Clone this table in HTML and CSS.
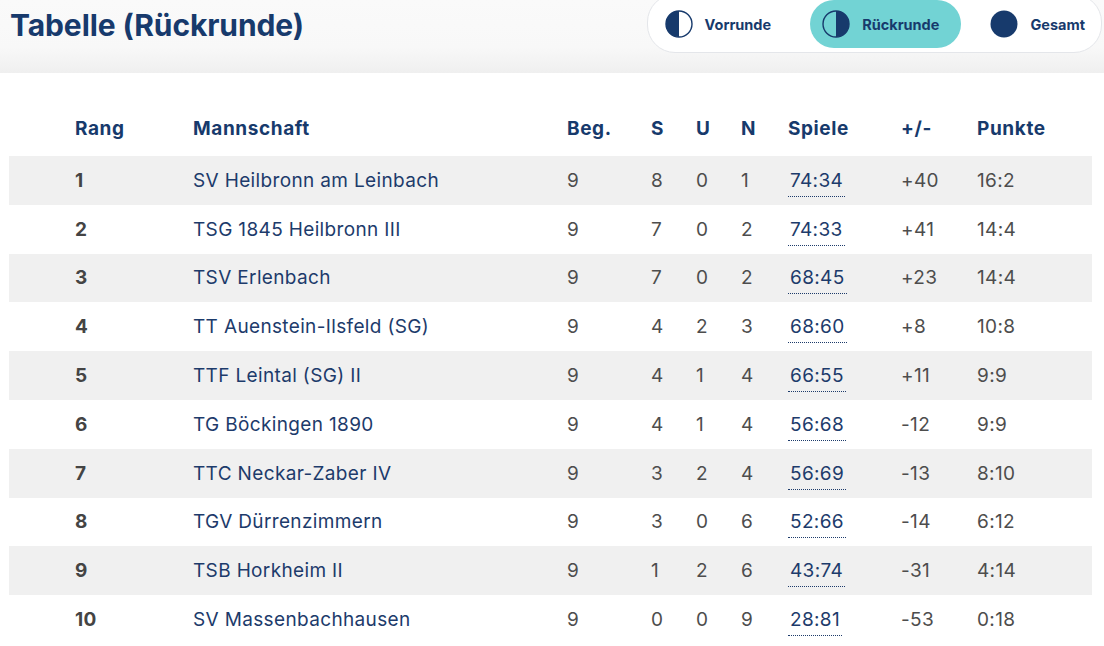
FILE: index.html
```html
<!DOCTYPE html>
<html lang="de">
<head>
<meta charset="utf-8">
<title>Tabelle (Rückrunde)</title>
<link rel="stylesheet" href="styles.css">
</head>
<body>
<header class="topbar">
  <h1 class="title">Tabelle (Rückrunde)</h1>
  <nav class="toggle">
    <a class="tbtn" href="#">
      <svg class="ico" viewBox="0 0 28 28"><circle cx="14" cy="14" r="13" fill="none" stroke="#173a6c" stroke-width="1.4"/><path d="M14 1 A13 13 0 0 0 14 27 Z" fill="#173a6c"/></svg>
      <span>Vorrunde</span>
    </a>
    <a class="tbtn active" href="#">
      <svg class="ico" viewBox="0 0 28 28"><circle cx="14" cy="14" r="13" fill="none" stroke="#173a6c" stroke-width="1.4"/><path d="M14 1 A13 13 0 0 1 14 27 Z" fill="#173a6c"/></svg>
      <span>Rückrunde</span>
    </a>
    <a class="tbtn last" href="#">
      <svg class="ico" viewBox="0 0 28 28"><circle cx="14" cy="14" r="13.5" fill="#173a6c"/></svg>
      <span>Gesamt</span>
    </a>
  </nav>
</header>
<main>
<table class="standings">
  <colgroup>
    <col class="c-rang"><col class="c-team"><col class="c-beg"><col class="c-s"><col class="c-u"><col class="c-n"><col class="c-spiele"><col class="c-diff"><col class="c-pkt">
  </colgroup>
  <thead>
    <tr><th class="rang">Rang</th><th>Mannschaft</th><th>Beg.</th><th>S</th><th>U</th><th>N</th><th>Spiele</th><th>+/-</th><th>Punkte</th></tr>
  </thead>
  <tbody>
    <tr><td class="rang">1</td><td class="team">SV Heilbronn am Leinbach</td><td>9</td><td>8</td><td>0</td><td>1</td><td><span class="games">74:34</span></td><td>+40</td><td>16:2</td></tr>
    <tr><td class="rang">2</td><td class="team">TSG 1845 Heilbronn III</td><td>9</td><td>7</td><td>0</td><td>2</td><td><span class="games">74:33</span></td><td>+41</td><td>14:4</td></tr>
    <tr><td class="rang">3</td><td class="team">TSV Erlenbach</td><td>9</td><td>7</td><td>0</td><td>2</td><td><span class="games">68:45</span></td><td>+23</td><td>14:4</td></tr>
    <tr><td class="rang">4</td><td class="team">TT Auenstein-Ilsfeld (SG)</td><td>9</td><td>4</td><td>2</td><td>3</td><td><span class="games">68:60</span></td><td>+8</td><td>10:8</td></tr>
    <tr><td class="rang">5</td><td class="team">TTF Leintal (SG) II</td><td>9</td><td>4</td><td>1</td><td>4</td><td><span class="games">66:55</span></td><td>+11</td><td>9:9</td></tr>
    <tr><td class="rang">6</td><td class="team">TG Böckingen 1890</td><td>9</td><td>4</td><td>1</td><td>4</td><td><span class="games">56:68</span></td><td>-12</td><td>9:9</td></tr>
    <tr><td class="rang">7</td><td class="team">TTC Neckar-Zaber IV</td><td>9</td><td>3</td><td>2</td><td>4</td><td><span class="games">56:69</span></td><td>-13</td><td>8:10</td></tr>
    <tr><td class="rang">8</td><td class="team">TGV Dürrenzimmern</td><td>9</td><td>3</td><td>0</td><td>6</td><td><span class="games">52:66</span></td><td>-14</td><td>6:12</td></tr>
    <tr><td class="rang">9</td><td class="team">TSB Horkheim II</td><td>9</td><td>1</td><td>2</td><td>6</td><td><span class="games">43:74</span></td><td>-31</td><td>4:14</td></tr>
    <tr><td class="rang">10</td><td class="team">SV Massenbachhausen</td><td>9</td><td>0</td><td>0</td><td>9</td><td><span class="games">28:81</span></td><td>-53</td><td>0:18</td></tr>
  </tbody>
</table>
</main>
</body>
</html>
```

FILE: styles.css
```css
* { box-sizing: border-box; }
html, body { margin: 0; padding: 0; overflow: hidden; }
body {
  font-family: Inter, "Noto Sans", "Liberation Sans", sans-serif;
  background: #ffffff;
  color: #173a6c;
  width: 1104px;
  height: 646px;
}
.topbar {
  height: 73px;
  display: flex;
  justify-content: space-between;
  align-items: flex-start;
  background: linear-gradient(to bottom, #fafafa 0%, #f8f8f8 65%, #efefef 100%);
}
.title {
  margin: 0;
  padding: 7px 0 0 10px;
  font-size: 30px;
  line-height: 36px;
  font-weight: 700;
  color: #173a6c;
  letter-spacing: -0.1px;
}
.toggle {
  margin-top: -6px;
  margin-right: 2px;
  height: 59px;
  padding: 5px 0 5px 5px;
  display: flex;
  gap: 17px;
  background: #ffffff;
  border: 1px solid #e4e6ea;
  border-radius: 28px;
}
.tbtn {
  display: flex;
  align-items: center;
  gap: 12px;
  height: 48px;
  padding: 0 22px 0 12px;
  border-radius: 24px;
  color: #173a6c;
  text-decoration: none;
  font-size: 14.5px;
  font-weight: 700;
}
.tbtn.active { background: #72d3d4; }
.tbtn.last { padding-right: 16px; }
.ico { width: 28px; height: 28px; display: block; flex: none; }

.standings {
  margin: 31px 0 0 9px;
  width: 1083px;
  border-collapse: collapse;
  table-layout: fixed;
  font-size: 19px;
  letter-spacing: 0.35px;
}
.c-rang { width: 184px; }
.c-team { width: 374px; }
.c-beg { width: 84px; }
.c-s { width: 45px; }
.c-u { width: 45px; }
.c-n { width: 47px; }
.c-spiele { width: 113px; }
.c-diff { width: 76px; }
.c-pkt { width: 115px; }

.standings th {
  height: 52px;
  padding: 0 0 4px 0;
  text-align: left;
  font-weight: 700;
  color: #173a6c;
  white-space: nowrap;
  letter-spacing: 0.6px;
}
.standings th.rang, .standings td.rang { padding-left: 66px; }
.standings td {
  height: 48.8px;
  padding: 0;
  text-align: left;
  color: #4d4d4d;
  white-space: nowrap;
}
.standings tbody tr:nth-child(odd) { background: #f0f0f0; }
.standings td.rang { font-weight: 700; color: #444444; }
.standings td.team { color: #1d3b6b; }
.games {
  position: relative;
  padding: 0 2px;
  color: #1d3b6b;
}
.games::after {
  content: "";
  position: absolute;
  left: 0;
  right: 0;
  bottom: -5px;
  border-bottom: 1.5px dotted #1d3b6b;
}
```
